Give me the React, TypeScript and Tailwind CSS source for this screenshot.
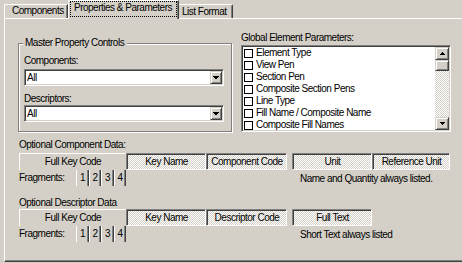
import React from "react";

const dither =
  "bg-[image:repeating-conic-gradient(#ffffff_0_25%,#d4d0c8_0_50%)] bg-[length:2px_2px]";

function Arrow({ dir, w = 7, h = 4 }: { dir: "up" | "down"; w?: number; h?: number }) {
  const pts = dir === "down" ? `0,0 ${w},0 ${w / 2},${h}` : `0,${h} ${w},${h} ${w / 2},0`;
  return (
    <svg width={w} height={h} viewBox={`0 0 ${w} ${h}`} className="block">
      <polygon points={pts} fill="#000" shapeRendering="crispEdges" />
    </svg>
  );
}

function Combo({ value }: { value: string }) {
  return (
    <div className="w-[200px] h-[17px] bg-white flex items-center pr-[1px] border border-t-[#808080] border-l-[#808080] border-r-white border-b-white shadow-[inset_1px_1px_0_#404040,inset_-1px_-1px_0_#d4d0c8]">
      <span className="flex-1 pl-[2px]">{value}</span>
      <div className="w-[12px] h-[13px] bg-[#d4d0c8] flex items-center justify-center border border-t-[#d4d0c8] border-l-[#d4d0c8] border-r-[#404040] border-b-[#404040] shadow-[inset_1px_1px_0_#ffffff,inset_-1px_-1px_0_#808080]">
        <Arrow dir="down" w={6} h={4} />
      </div>
    </div>
  );
}

function ScrollBtn({ dir }: { dir: "up" | "down" }) {
  return (
    <div className="w-[14px] h-[13px] bg-[#d4d0c8] flex items-center justify-center border border-t-[#d4d0c8] border-l-[#d4d0c8] border-r-[#404040] border-b-[#404040] shadow-[inset_1px_1px_0_#ffffff,inset_-1px_-1px_0_#808080]">
      <Arrow dir={dir} w={5} h={3} />
    </div>
  );
}

function RaisedToggle({ label, w }: { label: string; w: string }) {
  return (
    <div className={`${w} h-[17px] flex items-center justify-center border-t border-l border-t-white border-l-white`}>
      {label}
    </div>
  );
}

function PressedToggle({ label, w }: { label: string; w: string }) {
  return (
    <div
      className={`${w} h-[17px] flex items-center justify-center pt-[1px] pl-[1px] border border-t-[#808080] border-l-[#808080] border-r-white border-b-white shadow-[inset_1px_1px_0_#404040] ${dither}`}
    >
      {label}
    </div>
  );
}

function FragBtn({ n, w }: { n: string; w: string }) {
  return (
    <div className={`${w} h-[16px] flex items-center justify-center border-l border-r border-l-white border-r-[#404040] shadow-[inset_-1px_0_0_#808080]`}>
      {n}
    </div>
  );
}

function FragRow({ note }: { note: string }) {
  return (
    <div className="h-[16px] flex items-center">
      <span className="w-[57px]">Fragments:</span>
      <FragBtn n="1" w="w-[13px]" />
      <FragBtn n="2" w="w-[12px]" />
      <FragBtn n="3" w="w-[13px]" />
      <FragBtn n="4" w="w-[12px]" />
      <span className="ml-[174px] pt-[2px]">{note}</span>
    </div>
  );
}

const items = [
  "Element Type",
  "View Pen",
  "Section Pen",
  "Composite Section Pens",
  "Line Type",
  "Fill Name / Composite Name",
  "Composite Fill Names",
];

export default function App() {
  return (
    <div className="w-[462px] h-[263px] bg-[#d4d0c8] overflow-hidden text-black font-['Liberation_Sans',Arial,sans-serif] text-[10px] leading-[12px] tracking-[-0.5px]">
      {/* Tabs */}
      <div className="h-[18px] flex items-end pl-[4px] relative z-10">
        <div className="w-[64px] h-[14px] pl-[7px] border-t border-l border-r border-t-white border-l-white border-r-[#404040] rounded-tl-[2px] shadow-[inset_-1px_0_0_#808080]">
          Components
        </div>
        <div className="w-[111px] h-[19px] -mb-[1px] bg-[#d4d0c8] border-t border-l border-r border-t-white border-l-white border-r-[#404040] rounded-tl-[2px] shadow-[inset_-1px_0_0_#808080] pl-[1px]">
          <span className="flex items-start w-[107px] h-[16px] pl-[3px] border border-dotted border-black">
            Properties &amp; Parameters
          </span>
        </div>
        <div className="w-[54px] h-[14px] pl-[3px] pt-[1px] border-t border-r border-t-white border-r-[#404040] rounded-tr-[2px] shadow-[inset_-1px_0_0_#808080]">
          List Format
        </div>
      </div>

      {/* Panel */}
      <div className="ml-[4px] h-[244px] border-t border-l border-b border-t-white border-l-white border-b-[#404040] shadow-[inset_0_-1px_0_#808080]">
        <div className="flex pl-[13px]">
          {/* Group box */}
          <div className="relative mt-[24px] w-[214px] h-[89px] border border-[#808080] shadow-[1px_1px_0_#ffffff,inset_1px_1px_0_#ffffff] pt-[11px] px-[5px]">
            <span className="absolute left-[4px] top-[-7px] pl-[2px] pr-[3px] bg-[#d4d0c8]">
              Master Property Controls
            </span>
            <div className="h-[12px]">Components:</div>
            <div className="mt-[2px]">
              <Combo value="All" />
            </div>
            <div className="mt-[7px] h-[12px]">Descriptors:</div>
            <div>
              <Combo value="All" />
            </div>
          </div>

          {/* Right column */}
          <div className="ml-[9px] mt-[13px]">
            <div className="h-[12px]">Global Element Parameters:</div>
            <div className="mt-[1px] w-[210px] h-[87px] bg-white p-px flex border border-t-[#808080] border-l-[#808080] border-r-white border-b-white shadow-[inset_1px_1px_0_#404040,inset_-1px_-1px_0_#d4d0c8]">
              <div className="flex-1 overflow-hidden">
                {items.map((t) => (
                  <div key={t} className="h-[12px] flex items-center pl-[1px] whitespace-nowrap">
                    <span className="w-[9px] h-[9px] border border-black bg-white shrink-0" />
                    <span className="ml-[3px]">{t}</span>
                  </div>
                ))}
              </div>
              <div className="w-[14px] flex flex-col">
                <ScrollBtn dir="up" />
                <div className="w-[14px] h-[11px] bg-[#d4d0c8] border border-t-[#d4d0c8] border-l-[#d4d0c8] border-r-[#404040] border-b-[#404040] shadow-[inset_1px_1px_0_#ffffff,inset_-1px_-1px_0_#808080]" />
                <div className={`flex-1 ${dither}`} />
                <ScrollBtn dir="down" />
              </div>
            </div>
          </div>
        </div>

        {/* Optional data */}
        <div className="pl-[14px] mt-[7px]">
          <div className="h-[12px]">Optional Component Data:</div>
          <div className="mt-[2px] flex">
            <RaisedToggle label="Full Key Code" w="w-[107px]" />
            <PressedToggle label="Key Name" w="w-[80px]" />
            <PressedToggle label="Component Code" w="w-[81px]" />
            <div className="w-[5px]" />
            <PressedToggle label="Unit" w="w-[80px]" />
            <PressedToggle label="Reference Unit" w="w-[78px]" />
          </div>
          <FragRow note="Name and Quantity always listed." />

          <div className="mt-[11px] h-[12px]">Optional Descriptor Data</div>
          <div className="flex">
            <RaisedToggle label="Full Key Code" w="w-[107px]" />
            <PressedToggle label="Key Name" w="w-[80px]" />
            <PressedToggle label="Descriptor Code" w="w-[81px]" />
            <div className="w-[5px]" />
            <PressedToggle label="Full Text" w="w-[80px]" />
          </div>
          <FragRow note="Short Text always listed" />
        </div>
      </div>
    </div>
  );
}
